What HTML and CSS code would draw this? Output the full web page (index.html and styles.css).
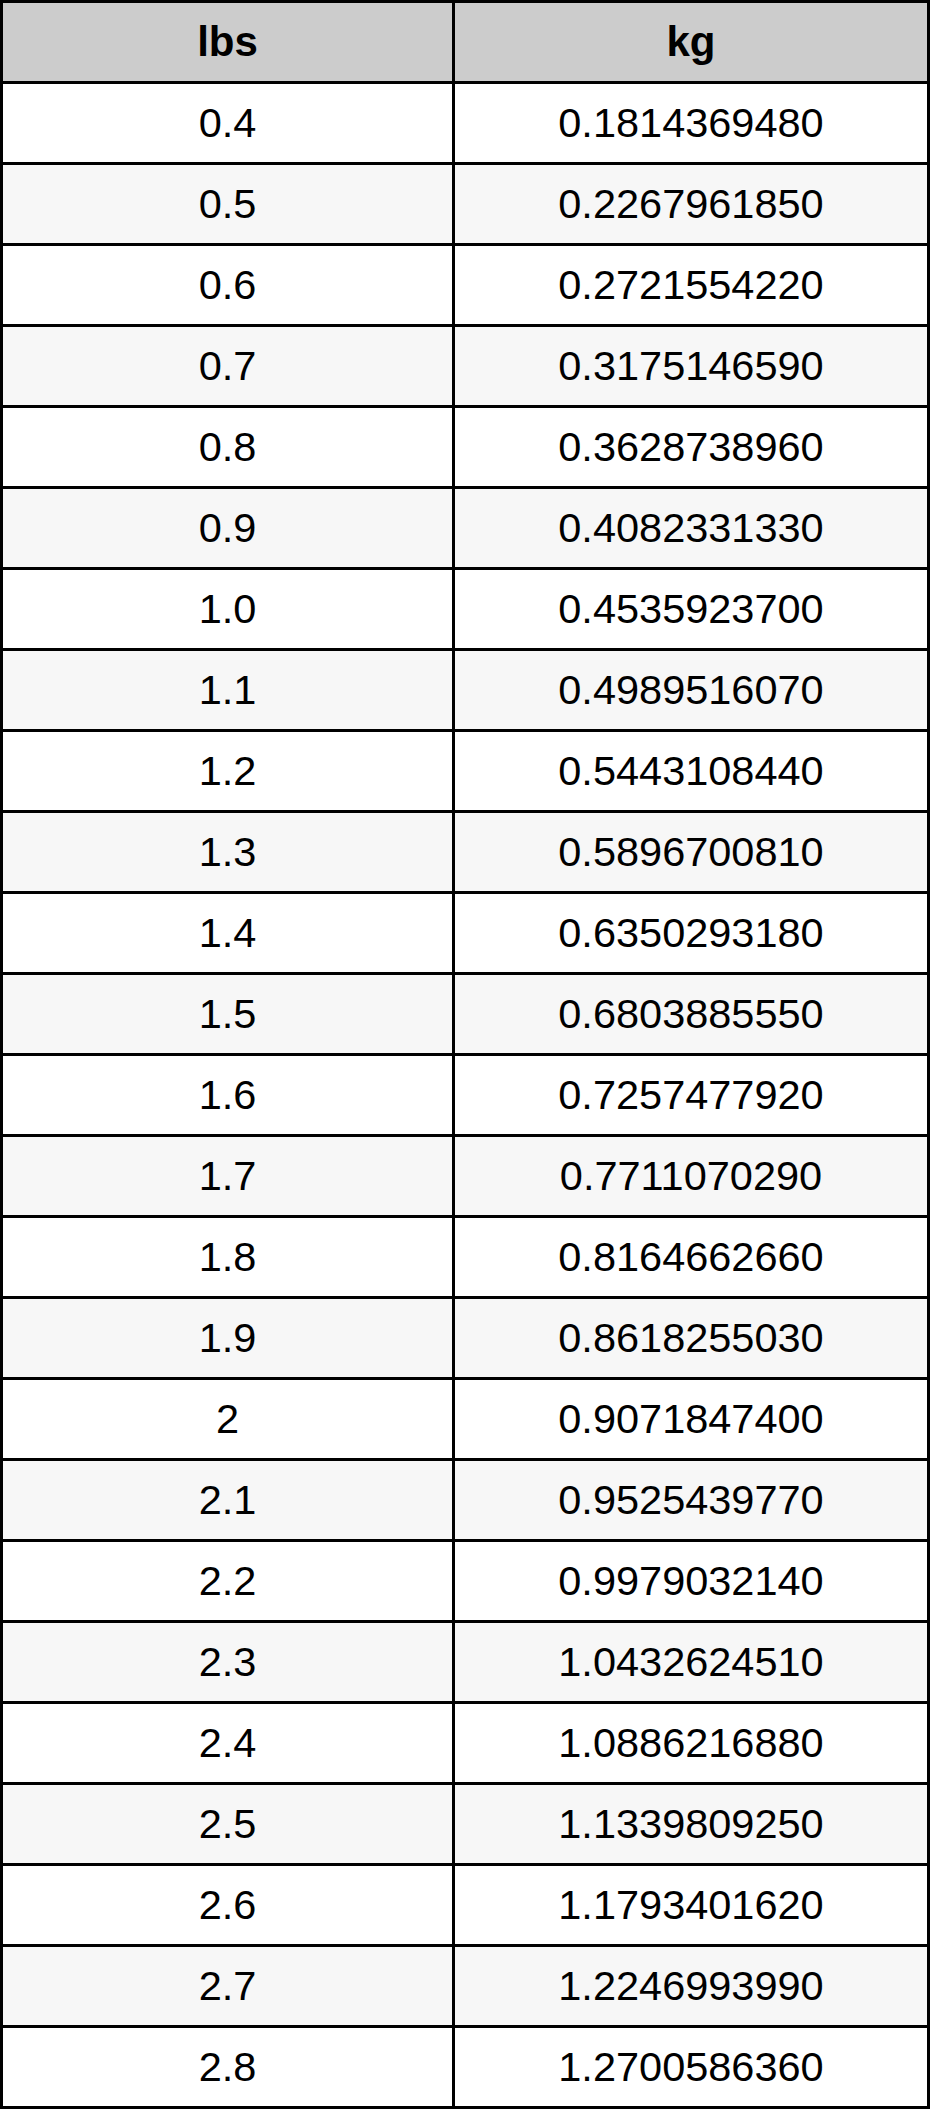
FILE: index.html
```html
<!DOCTYPE html>
<html>
<head>
<meta charset="utf-8">
<link rel="stylesheet" href="styles.css">
</head>
<body>
<table class="conv">
<colgroup><col class="c1"><col class="c2"></colgroup>
<thead>
<tr><th>lbs</th><th>kg</th></tr>
</thead>
<tbody>
<tr><td>0.4</td><td>0.1814369480</td></tr>
<tr class="alt"><td>0.5</td><td>0.2267961850</td></tr>
<tr><td>0.6</td><td>0.2721554220</td></tr>
<tr class="alt"><td>0.7</td><td>0.3175146590</td></tr>
<tr><td>0.8</td><td>0.3628738960</td></tr>
<tr class="alt"><td>0.9</td><td>0.4082331330</td></tr>
<tr><td>1.0</td><td>0.4535923700</td></tr>
<tr class="alt"><td>1.1</td><td>0.4989516070</td></tr>
<tr><td>1.2</td><td>0.5443108440</td></tr>
<tr class="alt"><td>1.3</td><td>0.5896700810</td></tr>
<tr><td>1.4</td><td>0.6350293180</td></tr>
<tr class="alt"><td>1.5</td><td>0.6803885550</td></tr>
<tr><td>1.6</td><td>0.7257477920</td></tr>
<tr class="alt"><td>1.7</td><td>0.7711070290</td></tr>
<tr><td>1.8</td><td>0.8164662660</td></tr>
<tr class="alt"><td>1.9</td><td>0.8618255030</td></tr>
<tr><td>2</td><td>0.9071847400</td></tr>
<tr class="alt"><td>2.1</td><td>0.9525439770</td></tr>
<tr><td>2.2</td><td>0.9979032140</td></tr>
<tr class="alt"><td>2.3</td><td>1.0432624510</td></tr>
<tr><td>2.4</td><td>1.0886216880</td></tr>
<tr class="alt"><td>2.5</td><td>1.1339809250</td></tr>
<tr><td>2.6</td><td>1.1793401620</td></tr>
<tr class="alt"><td>2.7</td><td>1.2246993990</td></tr>
<tr><td>2.8</td><td>1.2700586360</td></tr>
</tbody>
</table>
</body>
</html>
```
FILE: styles.css
```css
html, body {
  margin: 0;
  padding: 0;
  background: #ffffff;
}

.conv {
  width: 930px;
  table-layout: fixed;
  border-collapse: separate;
  border-spacing: 0;
  border-top: 3px solid #000;
  border-left: 3px solid #000;
  font-family: "Liberation Sans", Arial, sans-serif;
  font-size: 41.5px;
  color: #000;
}

.c1 { width: 452px; }
.c2 { width: 475px; }

.conv th,
.conv td {
  box-sizing: border-box;
  height: 81px;
  padding: 0;
  text-align: center;
  vertical-align: middle;
  border-right: 3px solid #000;
  border-bottom: 3px solid #000;
  line-height: 1;
}

.conv th {
  background: #cccccc;
  font-weight: bold;
  font-size: 42px;
}

.conv tr.alt td {
  background: #f7f7f7;
}
```
